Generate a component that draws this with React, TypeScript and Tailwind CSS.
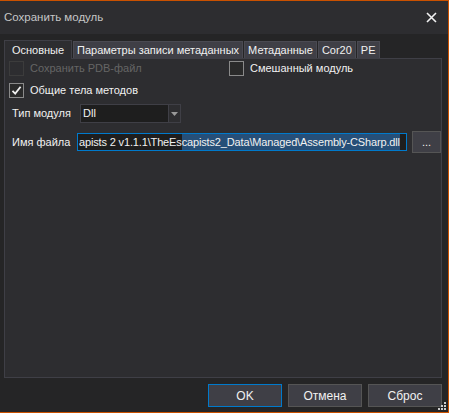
import React from 'react';

const font = { fontFamily: '"Liberation Sans", Arial, sans-serif' };

function Check({ checked, disabled }: { checked?: boolean; disabled?: boolean }) {
  return (
    <div
      className={`w-[15px] h-[15px] border flex items-center justify-center shrink-0 ${
        disabled ? 'border-[#3c3c3c] bg-[#2d2d30]' : 'border-[#8a8a8a] bg-[#2a2a2a]'
      }`}
    >
      {checked && (
        <svg width="11" height="11" viewBox="0 0 11 11">
          <path d="M1.5 5.8 L4.2 8.6 L9.6 1.8" stroke="#f1f1f1" strokeWidth="1.8" fill="none" />
        </svg>
      )}
    </div>
  );
}

const tabs = ['Параметры записи метаданных', 'Метаданные', 'Cor20', 'PE'];

export default function App() {
  return (
    <div
      className="w-[449px] h-[413px] bg-[#252526] border-t border-r border-b border-[#ca5100] flex flex-col text-[11px] text-[#f1f1f1] overflow-hidden"
      style={font}
    >
      {/* title bar */}
      <div className="h-[33px] bg-[#2d2d30] flex items-center justify-between pl-[4px] pr-[11px] shrink-0">
        <span className="text-[#c6c6c6] text-[11.5px]">Сохранить модуль</span>
        <svg width="11" height="11" viewBox="0 0 11 11">
          <path d="M1 1 L10 10 M10 1 L1 10" stroke="#f1f1f1" strokeWidth="1.6" />
        </svg>
      </div>

      <div className="flex-1 flex flex-col pl-[4px] pr-[6px] pt-[5px]">
        {/* tabs */}
        <div className="flex items-end h-[19px] shrink-0 whitespace-nowrap">
          <div className="h-[19px] w-[68px] bg-[#2d2d30] border-t border-l border-r border-[#3f3f46] flex items-center justify-center relative top-[1px] z-10">
            Основные
          </div>
          {tabs.map((t) => (
            <div
              key={t}
              className="h-[17px] px-[3px] ml-[1px] bg-[#3f3f46] border border-b-0 border-[#4a4a52] flex items-center text-[#f1f1f1]"
            >
              {t}
            </div>
          ))}
        </div>

        {/* panel */}
        <div className="h-[320px] border border-[#3f3f46] bg-[#2d2d30] flex flex-col shrink-0 whitespace-nowrap">
          <div className="flex pt-[2px]">
            <div className="w-[224px] flex flex-col gap-[7px] pl-[4px]">
              <div className="flex items-center gap-[6px] h-[15px]">
                <Check disabled />
                <span className="text-[#656565]">Сохранить PDB-файл</span>
              </div>
              <div className="flex items-center gap-[6px] h-[15px]">
                <Check checked />
                <span>Общие тела методов</span>
              </div>
            </div>
            <div className="flex items-center gap-[6px] h-[15px]">
              <Check />
              <span>Смешанный модуль</span>
            </div>
          </div>

          <div className="flex items-center mt-[6px] h-[19px]">
            <span className="w-[75px] pl-[7px]">Тип модуля</span>
            <div className="w-[101px] h-[19px] border border-[#3f3f46] bg-[#1e1e1e] flex">
              <span className="flex-1 pl-[2px] leading-[17px]">Dll</span>
              <div className="w-[12px] bg-[#2d2d30] border-l border-[#3f3f46] flex items-center justify-center">
                <svg width="7" height="4" viewBox="0 0 7 4">
                  <path d="M0 0 H7 L3.5 4 Z" fill="#999999" />
                </svg>
              </div>
            </div>
          </div>

          <div className="flex items-center mt-[8px] h-[22px]">
            <span className="w-[72px] pl-[7px]">Имя файла</span>
            <div className="w-[330px] h-[18px] border border-[#007acc] bg-[#1e1e1e] flex items-center overflow-hidden pl-[1px] tracking-[-0.15px]">
              <span>apists 2 v1.1.1\TheEs</span>
              <span className="bg-[#264f78]">capists2_Data\Managed\Assembly-CSharp.dll</span>
            </div>
            <div className="ml-[5px] w-[29px] h-[22px] bg-[#3f3f46] border border-[#555555] flex items-center justify-center leading-none">
              ...
            </div>
          </div>
        </div>

        {/* footer */}
        <div className="flex justify-end gap-[6px] pt-[6px] text-[12px]">
          <div className="w-[74px] h-[23px] bg-[#3f3f46] border border-[#007acc] flex items-center justify-center">OK</div>
          <div className="w-[74px] h-[23px] bg-[#3f3f46] border border-[#555555] flex items-center justify-center">Отмена</div>
          <div className="w-[74px] h-[23px] bg-[#3f3f46] border border-[#555555] flex items-center justify-center">Сброс</div>
        </div>
        <div className="flex justify-end -mr-[5px] mt-[-6px]">
          <svg width="12" height="12" viewBox="0 0 12 12">
            <g fill="#cccccc">
              <rect x="9" y="1" width="2" height="2" />
              <rect x="6" y="4" width="2" height="2" />
              <rect x="9" y="4" width="2" height="2" />
              <rect x="3" y="7" width="2" height="2" />
              <rect x="6" y="7" width="2" height="2" />
              <rect x="9" y="7" width="2" height="2" />
            </g>
          </svg>
        </div>
      </div>
    </div>
  );
}
